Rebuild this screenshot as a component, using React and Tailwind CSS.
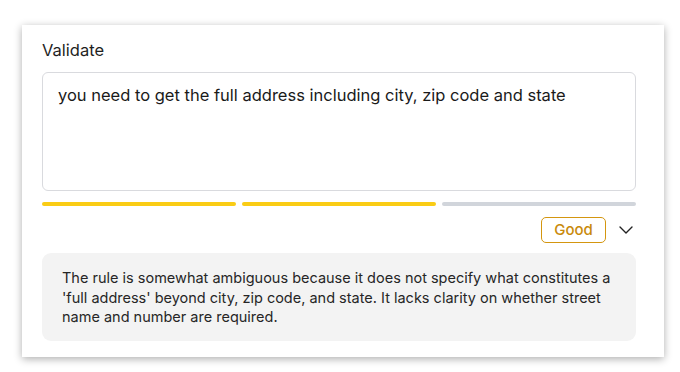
import React from "react";

export default function App() {
  return (
    <div className="min-h-[372px] w-[680px] bg-white pt-[25px] pl-[22px]" style={{ fontFamily: "Inter, 'Noto Sans', sans-serif" }}>
      <div className="w-[642px] bg-white pl-[20px] pr-[28px] pt-[15px] pb-[16px] shadow-[0_2px_8px_rgba(0,0,0,0.32)]">
        <div className="text-[16.5px] leading-[20px] text-[#1f1f1f]">Validate</div>
        <div className="mt-[12px] h-[119px] rounded-[6px] border border-[#d9dade] px-[15px] pt-[11px] text-[16.5px] leading-[22px] text-[#1a1a1a]">
          you need to get the full address including city, zip code and state
        </div>
        <div className="mt-[11px] flex gap-[6px]">
          <div className="h-[4px] flex-1 rounded-full bg-[#facc15]" />
          <div className="h-[4px] flex-1 rounded-full bg-[#facc15]" />
          <div className="h-[4px] flex-1 rounded-full bg-[#d1d5db]" />
        </div>
        <div className="mt-[11px] flex items-center justify-end">
          <div className="flex h-[26px] w-[65px] items-center justify-center rounded-[5px] border border-[#d4960f] text-[15px] font-medium text-[#c98a0b]">
            Good
          </div>
          <svg className="ml-[13px] mr-[3px]" width="14" height="8" viewBox="0 0 14 8" fill="none" stroke="#222" strokeWidth="1.4" strokeLinecap="round" strokeLinejoin="round">
            <path d="M1 1l6 6 6-6" />
          </svg>
        </div>
        <div className="mt-[10px] rounded-[9px] bg-[#f3f3f3] px-[20px] pt-[15px] pb-[14px] text-[14.5px] leading-[19.5px] text-[#262626]">
          The rule is somewhat ambiguous because it does not specify what constitutes a 'full address' beyond city, zip code, and state. It lacks clarity on whether street name and number are required.
        </div>
      </div>
    </div>
  );
}
